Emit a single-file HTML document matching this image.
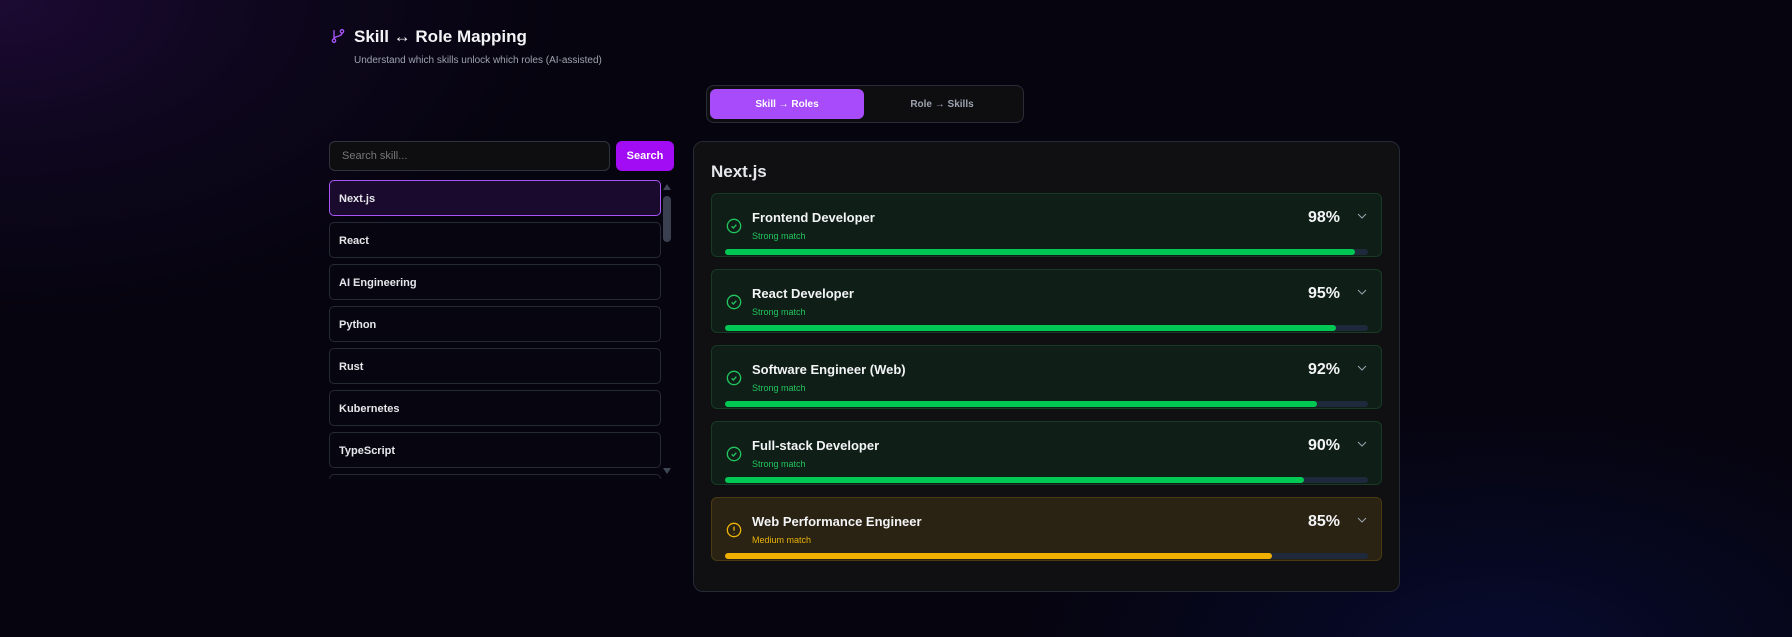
<!DOCTYPE html>
<html><head><meta charset="utf-8"><style>
*{box-sizing:border-box;margin:0;padding:0}
body{width:1792px;height:637px;overflow:hidden;font-family:"Liberation Sans",sans-serif;color:#e5e7eb;
background:radial-gradient(ellipse 700px 400px at 0 0,#1c0a33 0%,rgba(20,8,40,.55) 40%,transparent 80%),radial-gradient(ellipse 600px 300px at 1500px 650px,#070b2e 0%,transparent 80%),#06040f;position:relative}
.abs{position:absolute}
h1{position:absolute;left:354px;top:27px;font-size:17px;font-weight:bold;color:#f3f4f6}
.sub{left:354px;top:55px;font-size:10px;color:#9ca3af}
.tog{left:706px;top:85px;width:318px;height:38px;border:1px solid #2a2d38;border-radius:8px;background:#0e0e10}
.tb{position:absolute;top:3px;height:30px;width:154px;border-radius:6px;font-size:10px;font-weight:bold;display:flex;align-items:center;justify-content:center}
.inp{left:329px;top:141px;width:281px;height:30px;border:1px solid #2f333d;border-radius:6px;background:#0e0e10;font-size:11px;color:#777;padding:8px 12px}
.btn{left:616px;top:141px;width:58px;height:30px;border-radius:6px;background:#a20cf5;color:#fff;font-size:11px;font-weight:bold;display:flex;align-items:center;justify-content:center}
.list{left:329px;top:180px;width:332px;height:299px;overflow:hidden}
.it{height:36px;margin-bottom:6px;border:1px solid #262a36;border-radius:5px;background:#07050f;font-size:11px;font-weight:bold;color:#e5e7eb;padding:12px 9px 0}
.it.a{border-color:#a855f7;background:#1a0b2e}
.panel{left:693px;top:141px;width:707px;height:451px;border:1px solid #262a36;border-radius:10px;background:#101012}
.card{position:absolute;left:17px;width:671px;height:64px;border:1px solid #173b24;border-radius:6px;background:#0f1e17}
.card .t{position:absolute;left:40px;top:16px;font-size:13px;font-weight:bold;color:#f3f4f6}
.card .s{position:absolute;left:40px;top:37px;font-size:9px;color:#22c55e}
.card .p{position:absolute;right:41px;top:15px;font-size:16px;font-weight:bold;color:#f3f4f6}
.card .c{position:absolute;right:14px;top:18px}
.card .ic{position:absolute;left:14px;top:24px}
.bar{position:absolute;left:13px;right:13px;bottom:1px;height:6px;border-radius:3px;background:#1e293b}
.bar i{display:block;height:6px;border-radius:3px;background:#00c853}
.y{border-color:#4a3a14;background:#2a2212}
.y .s{color:#eab308}.y .bar i{background:#f0b000}
</style></head><body>
<svg class="abs" style="left:330px;top:28px" width="16" height="16" viewBox="0 0 24 24" fill="none" stroke="#a855f7" stroke-width="2" stroke-linecap="round"><circle cx="6" cy="19" r="2.5"/><circle cx="18" cy="5" r="2.5"/><path d="M6 16.5V4M18 7.5c0 6-12 4-12 9"/></svg>
<h1>Skill ↔ Role Mapping</h1>
<div class="abs sub">Understand which skills unlock which roles (AI-assisted)</div>
<div class="abs tog"><div class="tb" style="left:3px;background:#a84cfb;color:#fff">Skill → Roles</div><div class="tb" style="left:158px;color:#9ca3af">Role → Skills</div></div>
<div class="abs inp">Search skill...</div>
<div class="abs btn">Search</div>
<div class="abs list">
<div class="it a">Next.js</div><div class="it">React</div><div class="it">AI Engineering</div><div class="it">Python</div><div class="it">Rust</div><div class="it">Kubernetes</div><div class="it">TypeScript</div><div class="it"></div>
</div>
<svg class="abs" style="left:662px;top:183px" width="10" height="8"><path d="M1 7L5 1L9 7Z" fill="#3f4656"/></svg>
<div class="abs" style="left:663px;top:196px;width:8px;height:46px;border-radius:4px;background:#3a4050"></div>
<svg class="abs" style="left:662px;top:467px" width="10" height="8"><path d="M1 1L5 7L9 1Z" fill="#3f4656"/></svg>
<div class="abs panel">
<div class="abs" style="left:17px;top:20px;font-size:17px;font-weight:bold;color:#e5e7eb">Next.js</div>
<div class="card" style="top:51px"><svg class="ic" width="16" height="16" viewBox="0 0 24 24" fill="none" stroke="#22c55e" stroke-width="2"><circle cx="12" cy="12" r="10"/><path d="M8.5 12.5l2.5 2.5 4.5-5"/></svg><div class="t">Frontend Developer</div><div class="s">Strong match</div><div class="p">98%</div><svg class="c" width="10" height="8"><path d="M1 2l4 4 4-4" stroke="#9ca3af" fill="none"/></svg><div class="bar"><i style="width:98%"></i></div></div>
<div class="card" style="top:127px"><svg class="ic" width="16" height="16" viewBox="0 0 24 24" fill="none" stroke="#22c55e" stroke-width="2"><circle cx="12" cy="12" r="10"/><path d="M8.5 12.5l2.5 2.5 4.5-5"/></svg><div class="t">React Developer</div><div class="s">Strong match</div><div class="p">95%</div><svg class="c" width="10" height="8"><path d="M1 2l4 4 4-4" stroke="#9ca3af" fill="none"/></svg><div class="bar"><i style="width:95%"></i></div></div>
<div class="card" style="top:203px"><svg class="ic" width="16" height="16" viewBox="0 0 24 24" fill="none" stroke="#22c55e" stroke-width="2"><circle cx="12" cy="12" r="10"/><path d="M8.5 12.5l2.5 2.5 4.5-5"/></svg><div class="t">Software Engineer (Web)</div><div class="s">Strong match</div><div class="p">92%</div><svg class="c" width="10" height="8"><path d="M1 2l4 4 4-4" stroke="#9ca3af" fill="none"/></svg><div class="bar"><i style="width:92%"></i></div></div>
<div class="card" style="top:279px"><svg class="ic" width="16" height="16" viewBox="0 0 24 24" fill="none" stroke="#22c55e" stroke-width="2"><circle cx="12" cy="12" r="10"/><path d="M8.5 12.5l2.5 2.5 4.5-5"/></svg><div class="t">Full-stack Developer</div><div class="s">Strong match</div><div class="p">90%</div><svg class="c" width="10" height="8"><path d="M1 2l4 4 4-4" stroke="#9ca3af" fill="none"/></svg><div class="bar"><i style="width:90%"></i></div></div>
<div class="card y" style="top:355px"><svg class="ic" width="16" height="16" viewBox="0 0 24 24" fill="none" stroke="#eab308" stroke-width="2"><circle cx="12" cy="12" r="10"/><path d="M12 7v6M12 16.5v.5"/></svg><div class="t">Web Performance Engineer</div><div class="s">Medium match</div><div class="p">85%</div><svg class="c" width="10" height="8"><path d="M1 2l4 4 4-4" stroke="#9ca3af" fill="none"/></svg><div class="bar"><i style="width:85%"></i></div></div>
</div>
</body></html>
